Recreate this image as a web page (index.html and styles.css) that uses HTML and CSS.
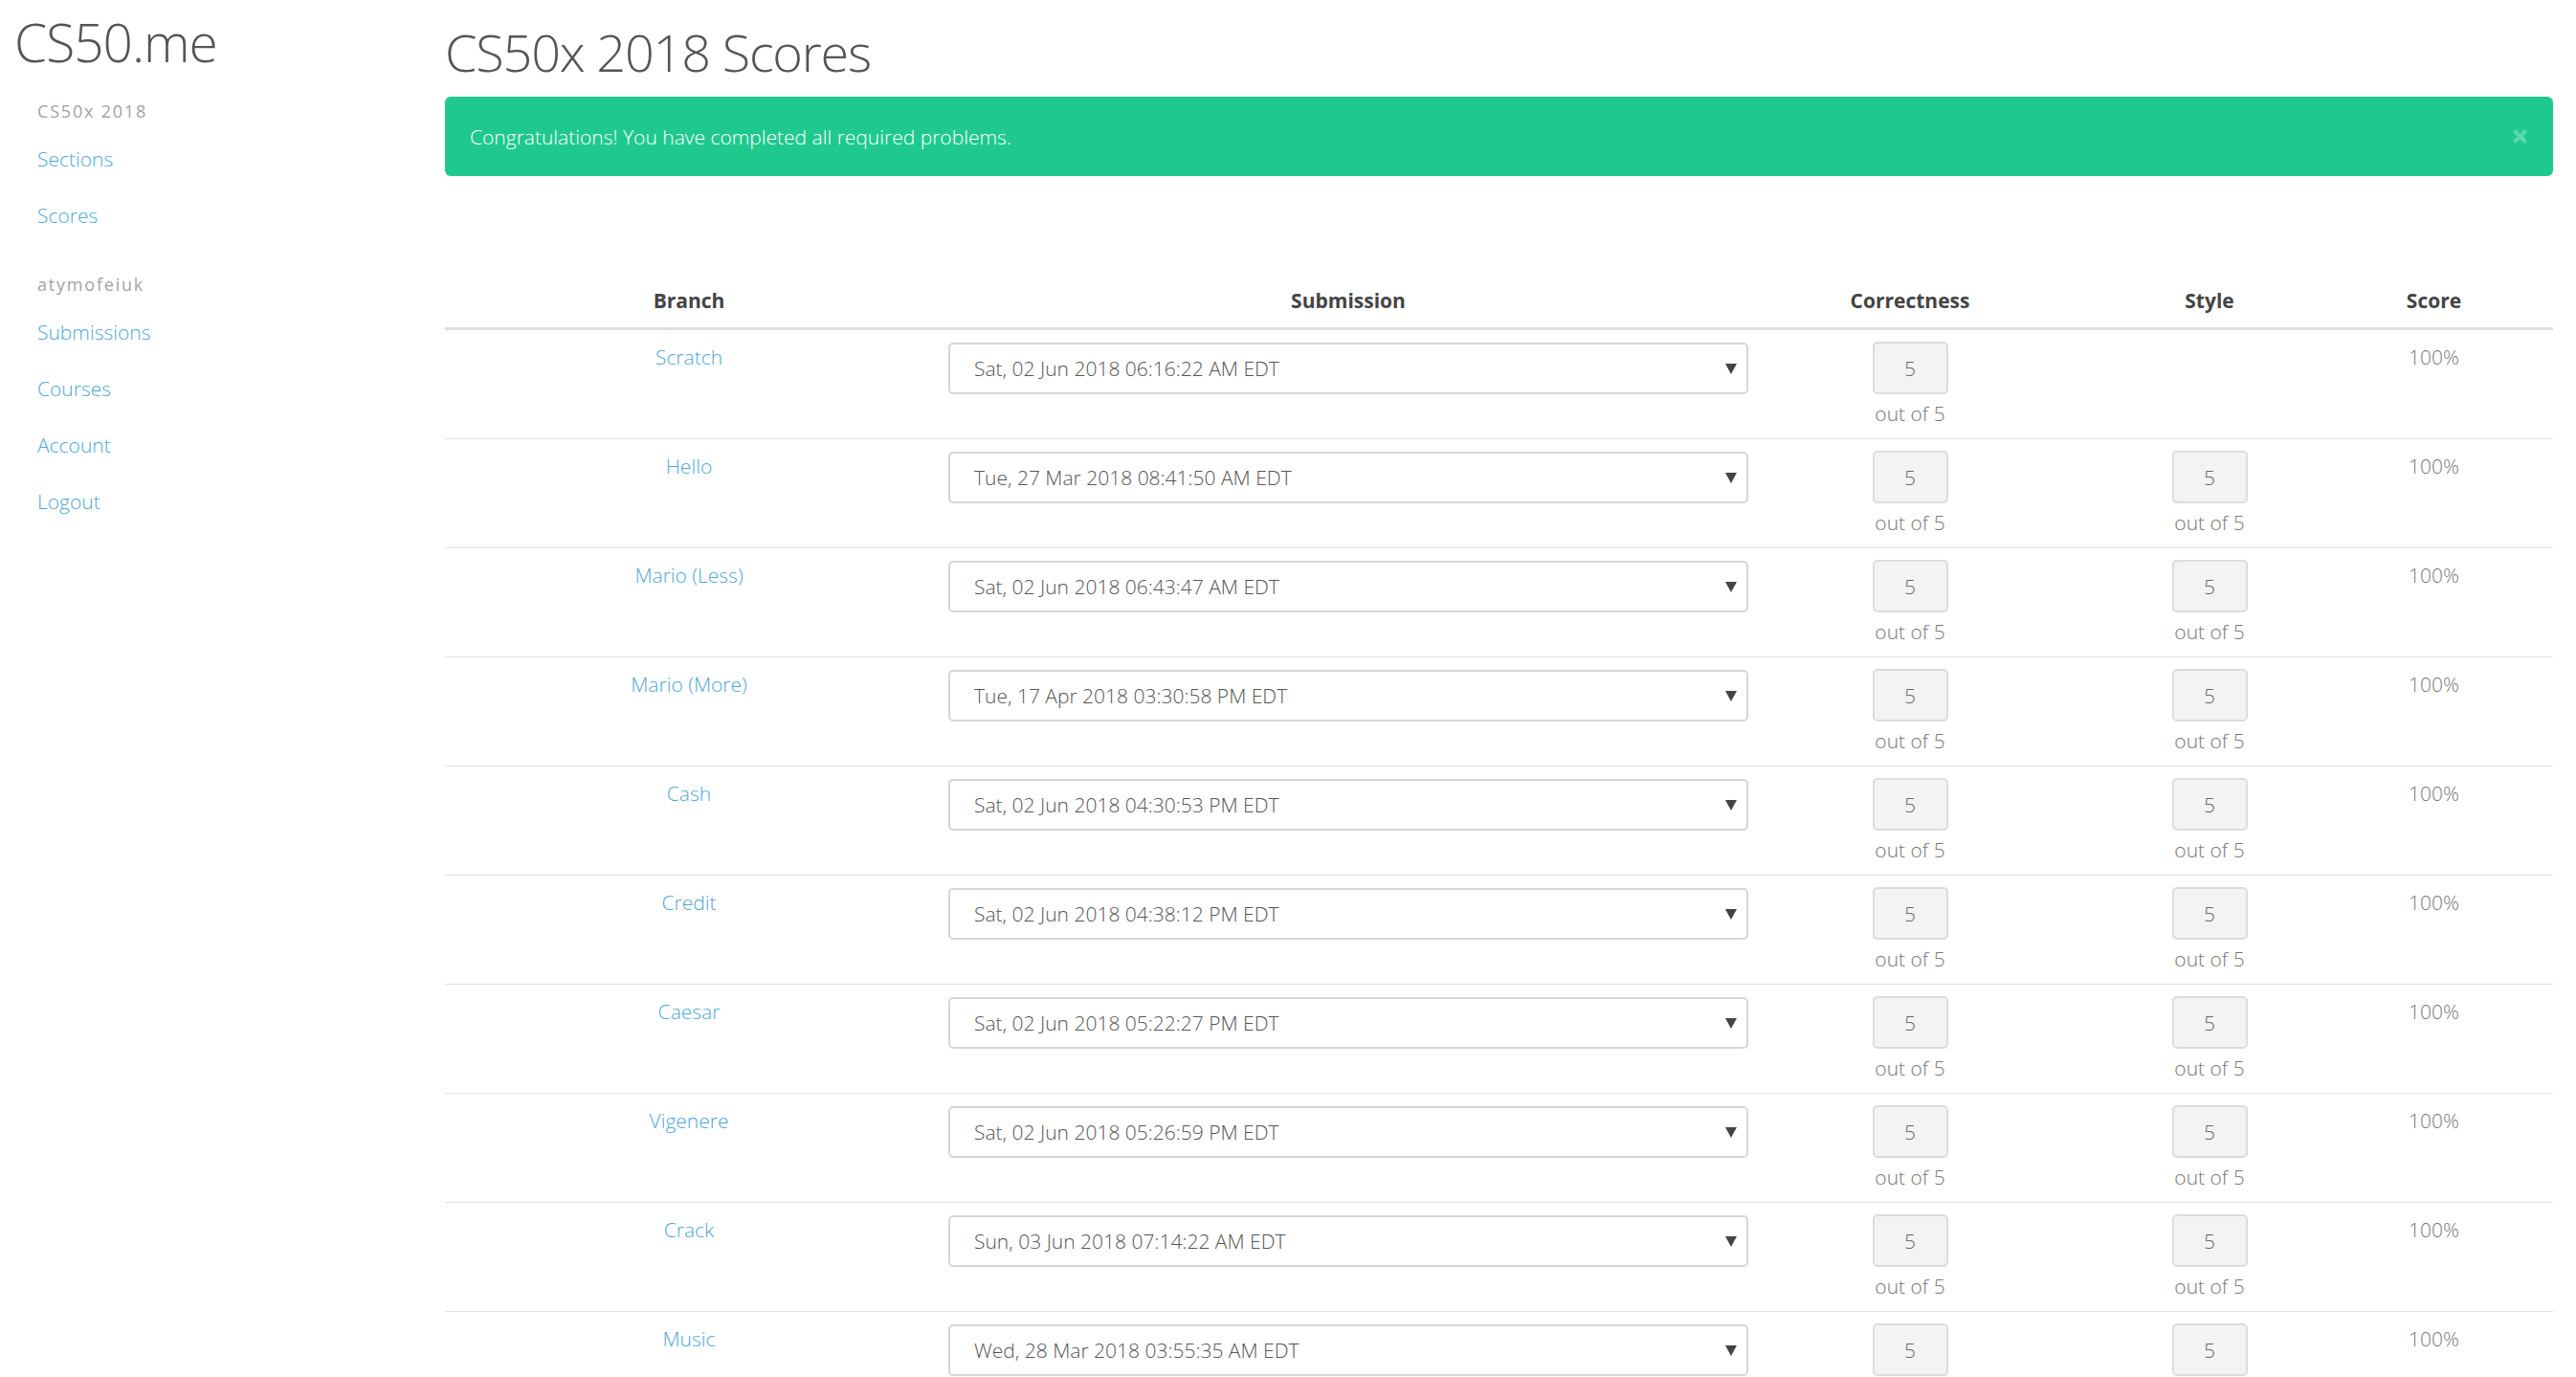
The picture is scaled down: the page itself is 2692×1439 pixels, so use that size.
FILE: index.html
```html
<!DOCTYPE html>
<html lang="en">
<head>
<meta charset="utf-8">
<title>CS50x 2018 Scores</title>
<link rel="stylesheet" href="styles.css">
</head>
<body>
<div class="page">
  <aside class="sidebar">
    <div class="logo">CS50.me</div>
    <div class="nav-group first">
      <div class="nav-label">CS50x 2018</div>
      <a class="nav-link" href="#">Sections</a>
      <a class="nav-link" href="#">Scores</a>
    </div>
    <div class="nav-group">
      <div class="nav-label">atymofeiuk</div>
      <a class="nav-link" href="#">Submissions</a>
      <a class="nav-link" href="#">Courses</a>
      <a class="nav-link" href="#">Account</a>
      <a class="nav-link" href="#">Logout</a>
    </div>
  </aside>
  <main class="main">
    <h1 class="title">CS50x 2018 Scores</h1>
    <div class="alert">
      <span>Congratulations! You have completed all required problems.</span>
      <svg class="close" width="17" height="17" viewBox="0 0 17 17"><path d="M2.5 2.5 L14.5 14.5 M14.5 2.5 L2.5 14.5" stroke="currentColor" stroke-width="4" stroke-linecap="butt"/></svg>
    </div>
    <table class="scores">
      <colgroup>
        <col class="c-branch"><col class="c-sub"><col class="c-corr"><col class="c-style"><col class="c-score">
      </colgroup>
      <thead>
        <tr><th>Branch</th><th>Submission</th><th>Correctness</th><th>Style</th><th class="score">Score</th></tr>
      </thead>
      <tbody>
        <tr>
          <td><a href="#">Scratch</a></td>
          <td><div class="select"><span>Sat, 02 Jun 2018 06:16:22 AM EDT</span><svg width="12" height="11" viewBox="0 0 12 11"><path d="M0 0H12L6 11Z" fill="#444"/></svg></div></td>
          <td><div class="box">5</div><div class="outof">out of 5</div></td>
          <td></td>
          <td class="score">100%</td>
        </tr>
        <tr>
          <td><a href="#">Hello</a></td>
          <td><div class="select"><span>Tue, 27 Mar 2018 08:41:50 AM EDT</span><svg width="12" height="11" viewBox="0 0 12 11"><path d="M0 0H12L6 11Z" fill="#444"/></svg></div></td>
          <td><div class="box">5</div><div class="outof">out of 5</div></td>
          <td><div class="box">5</div><div class="outof">out of 5</div></td>
          <td class="score">100%</td>
        </tr>
        <tr>
          <td><a href="#">Mario (Less)</a></td>
          <td><div class="select"><span>Sat, 02 Jun 2018 06:43:47 AM EDT</span><svg width="12" height="11" viewBox="0 0 12 11"><path d="M0 0H12L6 11Z" fill="#444"/></svg></div></td>
          <td><div class="box">5</div><div class="outof">out of 5</div></td>
          <td><div class="box">5</div><div class="outof">out of 5</div></td>
          <td class="score">100%</td>
        </tr>
        <tr>
          <td><a href="#">Mario (More)</a></td>
          <td><div class="select"><span>Tue, 17 Apr 2018 03:30:58 PM EDT</span><svg width="12" height="11" viewBox="0 0 12 11"><path d="M0 0H12L6 11Z" fill="#444"/></svg></div></td>
          <td><div class="box">5</div><div class="outof">out of 5</div></td>
          <td><div class="box">5</div><div class="outof">out of 5</div></td>
          <td class="score">100%</td>
        </tr>
        <tr>
          <td><a href="#">Cash</a></td>
          <td><div class="select"><span>Sat, 02 Jun 2018 04:30:53 PM EDT</span><svg width="12" height="11" viewBox="0 0 12 11"><path d="M0 0H12L6 11Z" fill="#444"/></svg></div></td>
          <td><div class="box">5</div><div class="outof">out of 5</div></td>
          <td><div class="box">5</div><div class="outof">out of 5</div></td>
          <td class="score">100%</td>
        </tr>
        <tr>
          <td><a href="#">Credit</a></td>
          <td><div class="select"><span>Sat, 02 Jun 2018 04:38:12 PM EDT</span><svg width="12" height="11" viewBox="0 0 12 11"><path d="M0 0H12L6 11Z" fill="#444"/></svg></div></td>
          <td><div class="box">5</div><div class="outof">out of 5</div></td>
          <td><div class="box">5</div><div class="outof">out of 5</div></td>
          <td class="score">100%</td>
        </tr>
        <tr>
          <td><a href="#">Caesar</a></td>
          <td><div class="select"><span>Sat, 02 Jun 2018 05:22:27 PM EDT</span><svg width="12" height="11" viewBox="0 0 12 11"><path d="M0 0H12L6 11Z" fill="#444"/></svg></div></td>
          <td><div class="box">5</div><div class="outof">out of 5</div></td>
          <td><div class="box">5</div><div class="outof">out of 5</div></td>
          <td class="score">100%</td>
        </tr>
        <tr>
          <td><a href="#">Vigenere</a></td>
          <td><div class="select"><span>Sat, 02 Jun 2018 05:26:59 PM EDT</span><svg width="12" height="11" viewBox="0 0 12 11"><path d="M0 0H12L6 11Z" fill="#444"/></svg></div></td>
          <td><div class="box">5</div><div class="outof">out of 5</div></td>
          <td><div class="box">5</div><div class="outof">out of 5</div></td>
          <td class="score">100%</td>
        </tr>
        <tr>
          <td><a href="#">Crack</a></td>
          <td><div class="select"><span>Sun, 03 Jun 2018 07:14:22 AM EDT</span><svg width="12" height="11" viewBox="0 0 12 11"><path d="M0 0H12L6 11Z" fill="#444"/></svg></div></td>
          <td><div class="box">5</div><div class="outof">out of 5</div></td>
          <td><div class="box">5</div><div class="outof">out of 5</div></td>
          <td class="score">100%</td>
        </tr>
        <tr>
          <td><a href="#">Music</a></td>
          <td><div class="select"><span>Wed, 28 Mar 2018 03:55:35 AM EDT</span><svg width="12" height="11" viewBox="0 0 12 11"><path d="M0 0H12L6 11Z" fill="#444"/></svg></div></td>
          <td><div class="box">5</div><div class="outof">out of 5</div></td>
          <td><div class="box">5</div><div class="outof">out of 5</div></td>
          <td class="score">100%</td>
        </tr>
      </tbody>
    </table>
  </main>
</div>
</body>
</html>
```
FILE: styles.css
```css
html, body {
  margin: 0;
  padding: 0;
  background: #fff;
}
body {
  font-family: "Open Sans", "Liberation Sans", sans-serif;
  font-weight: 300;
  font-size: 21px;
  line-height: 30px;
  color: #555;
}
a {
  color: #4ea7d8;
  text-decoration: none;
}
.page {
  display: flex;
  align-items: flex-start;
}
.sidebar {
  width: 465px;
  flex: none;
}
.logo {
  font-size: 55px;
  line-height: 62px;
  margin-top: 13px;
  padding-left: 15px;
  color: #555;
  font-weight: 300;
  letter-spacing: -1px;
}
.nav-group {
  padding-left: 39px;
  display: flex;
  flex-direction: column;
}
.nav-group.first {
  margin-top: 29px;
}
.nav-group + .nav-group {
  margin-top: 31px;
}
.nav-label {
  font-size: 18px;
  line-height: 25px;
  font-weight: 400;
  color: #a3a3a3;
  letter-spacing: 1.8px;
  margin-bottom: 7px;
}
.nav-link {
  display: block;
  padding: 14.5px 0;
  line-height: 30px;
}
.main {
  flex: 1;
  padding-right: 24px;
  min-width: 0;
}
.title {
  margin: 20px 0 13px;
  font-size: 54px;
  line-height: 68px;
  font-weight: 300;
  color: #555;
  letter-spacing: -1.2px;
}
.alert {
  display: flex;
  align-items: center;
  justify-content: space-between;
  height: 83px;
  box-sizing: border-box;
  padding: 0 26px 0 26px;
  background: #1fc98e;
  border-radius: 6px;
  color: #fff;
}
.alert .close {
  color: rgba(255, 255, 255, 0.28);
  flex: none;
}
.scores {
  width: 100%;
  margin-top: 107px;
  border-collapse: collapse;
  table-layout: fixed;
}
.c-branch { width: 510px; }
.c-sub { width: 868px; }
.c-corr { width: 306px; }
.c-style { width: 320px; }
.c-score { width: 199px; }
.scores th {
  font-weight: 700;
  color: #444;
  font-size: 21px;
  line-height: 30px;
  padding: 8px 16px 13px;
  border-bottom: 3px solid #dddddd;
  text-align: center;
}
.scores td {
  padding: 12px 16px 11px;
  border-bottom: 1px solid #e0e0e0;
  vertical-align: top;
  text-align: center;
}
.scores th.score,
.scores td.score {
  padding-right: 66px;
}
.scores td.score {
  padding-top: 13px;
  color: #777;
}
.scores td:first-child {
  padding-top: 13px;
}
.select {
  display: flex;
  align-items: center;
  justify-content: space-between;
  box-sizing: border-box;
  height: 54px;
  margin-top: 1px;
  padding: 0 10px 0 25px;
  border: 2px solid #d6d6d6;
  border-radius: 5px;
  color: #555;
  text-align: left;
}
.select svg {
  flex: none;
}
.box {
  box-sizing: border-box;
  width: 79px;
  height: 55px;
  margin: 0 auto;
  background: #f3f3f3;
  border: 2px solid #dcdcdc;
  border-radius: 5px;
  display: flex;
  align-items: center;
  justify-content: center;
  color: #666;
}
.outof {
  margin-top: 5px;
  color: #777;
}
```
